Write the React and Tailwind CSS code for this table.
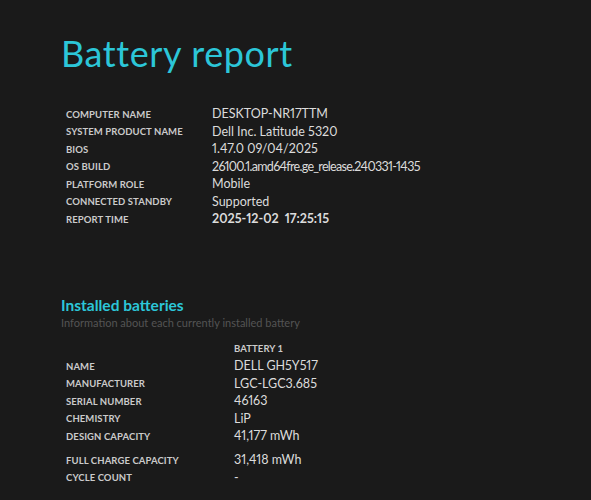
// Battery report page
import React from 'react';

const systemRows = [
  ['Computer name', 'DESKTOP-NR17TTM'],
  ['System product name', 'Dell Inc. Latitude 5320'],
  ['BIOS', '1.47.0 09/04/2025'],
  ['OS build', '26100.1.amd64fre.ge_release.240331-1435', 'tracking-[-0.7px]'],
  ['Platform role', 'Mobile'],
  ['Connected standby', 'Supported'],
];

const batteryRows = [
  ['Name', 'DELL GH5Y517'],
  ['Manufacturer', 'LGC-LGC3.685'],
  ['Serial number', '46163'],
  ['Chemistry', 'LiP'],
  ['Design capacity', '41,177 mWh'],
];

const batteryRows2 = [
  ['Full charge capacity', '31,418 mWh'],
  ['Cycle count', '-'],
];

const Label = ({ children }) => (
  <div className="uppercase font-bold text-[9.5px] tracking-[0.1px] text-[#cbcbcb]">{children}</div>
);

const Value = ({ children, className = '' }) => (
  <div className={`text-[12.5px] text-[#dcdcdc] whitespace-pre proportional-nums ${className}`}>{children}</div>
);

const Row = ({ label, value, labelWidth }) => (
  <div className="flex items-center h-[17.5px]">
    <div className={labelWidth}>{label}</div>
    {value}
  </div>
);

export default function App() {
  return (
    <div
      className="min-h-[500px] w-full bg-[#1a1a1a] overflow-hidden"
      style={{ fontFamily: 'Lato, "Open Sans", sans-serif' }}
    >
      <div className="pl-[61px] pt-[25px]">
        <h1 className="text-[36px] leading-[56px] font-normal tracking-[0.6px] text-[#2cc6d8]">Battery report</h1>

        {/* System info */}
        <div className="mt-[25px] pl-[5px]">
          {systemRows.map(([k, v, cls]) => (
            <Row key={k} labelWidth="w-[146px]" label={<Label>{k}</Label>} value={<Value className={cls || ''}>{v}</Value>} />
          ))}
          <Row
            labelWidth="w-[146px]"
            label={<Label>Report time</Label>}
            value={<Value className="font-bold">{'2025-12-02  17:25:15'}</Value>}
          />
        </div>

        {/* Installed batteries */}
        <div className="mt-[66px]">
          <h2 className="text-[15.5px] leading-[20px] font-bold text-[#2cc6d8]">Installed batteries</h2>
          <div className="text-[11px] leading-[15px] text-[#545454]">Information about each currently installed battery</div>
        </div>

        <div className="mt-[11px] pl-[5px]">
          <Row labelWidth="w-[168px]" label={null} value={<Label>Battery 1</Label>} />
          {batteryRows.map(([k, v]) => (
            <Row key={k} labelWidth="w-[168px]" label={<Label>{k}</Label>} value={<Value>{v}</Value>} />
          ))}
          <div className="h-[6.5px]" />
          {batteryRows2.map(([k, v]) => (
            <Row key={k} labelWidth="w-[168px]" label={<Label>{k}</Label>} value={<Value>{v}</Value>} />
          ))}
        </div>
      </div>
    </div>
  );
}
